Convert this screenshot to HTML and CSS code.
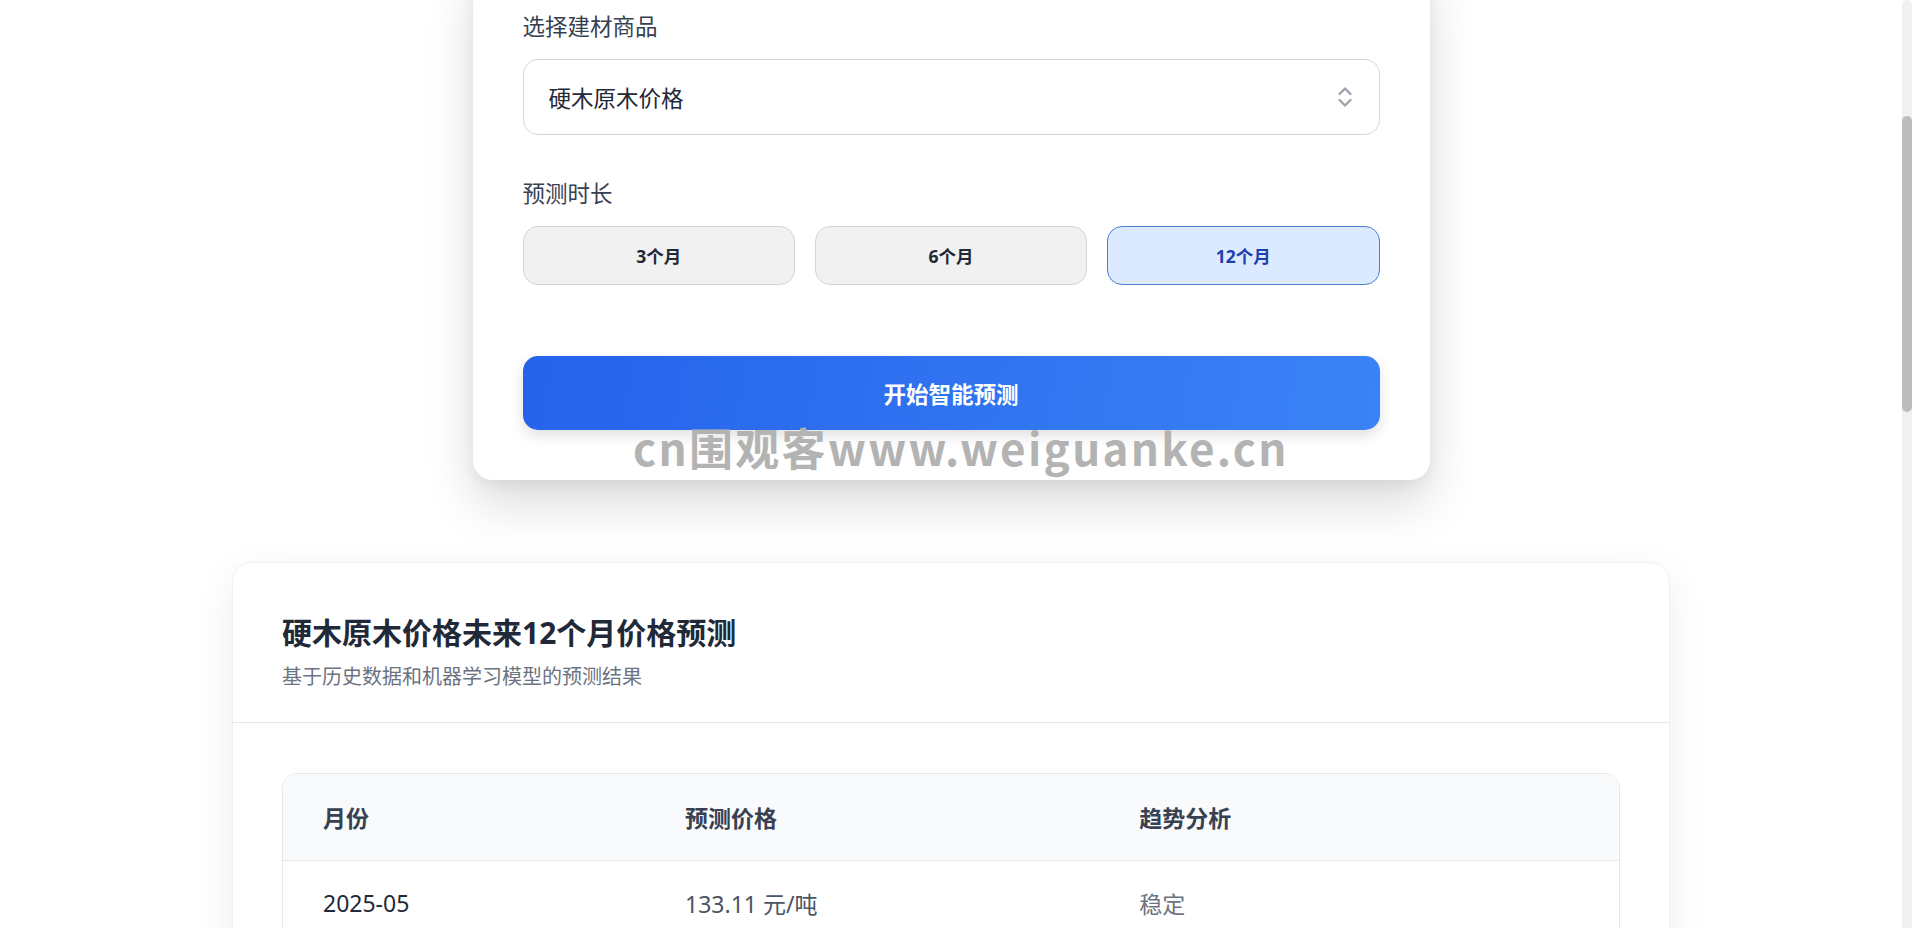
FILE: index.html
```html
<!DOCTYPE html>
<html lang="zh-CN">
<head>
  <meta charset="UTF-8">
  <title>建材价格智能预测</title>
  <link rel="stylesheet" href="styles.css">
</head>
<body>
  <div class="viewport">
    <main class="page">
      <!-- Forecast form -->
      <section class="card form-card">
        <div class="field">
          <label class="field-label">选择建材商品</label>
          <div class="select">
            <span>硬木原木价格</span>
            <svg class="select-icon" width="16" height="22" viewBox="0 0 16 22" fill="none" stroke="#9ca3af" stroke-width="2.4" stroke-linecap="round" stroke-linejoin="round">
              <polyline points="2.5,8 8,2.5 13.5,8"></polyline>
              <polyline points="2.5,14 8,19.5 13.5,14"></polyline>
            </svg>
          </div>
        </div>

        <div class="field">
          <label class="field-label">预测时长</label>
          <div class="period-options">
            <button class="period" type="button">3个月</button>
            <button class="period" type="button">6个月</button>
            <button class="period active" type="button">12个月</button>
          </div>
        </div>

        <button class="btn-primary" type="button">开始智能预测</button>
      </section>

      <!-- Forecast result -->
      <section class="card result-card">
        <div class="result-header">
          <h2>硬木原木价格未来12个月价格预测</h2>
          <p>基于历史数据和机器学习模型的预测结果</p>
        </div>
        <div class="result-body">
          <div class="table-wrap">
            <table>
              <thead>
                <tr>
                  <th class="col-month">月份</th>
                  <th class="col-price">预测价格</th>
                  <th>趋势分析</th>
                </tr>
              </thead>
              <tbody>
                <tr>
                  <td class="month">2025-05</td>
                  <td class="price">133.11 元/吨</td>
                  <td class="trend">稳定</td>
                </tr>
                <tr>
                  <td class="month">2025-06</td>
                  <td class="price">134.02 元/吨</td>
                  <td class="trend">上涨</td>
                </tr>
              </tbody>
            </table>
          </div>
        </div>
      </section>
    </main>

    <div class="scrollbar"><div class="thumb"></div></div>
  </div>

  <div class="watermark">cn围观客www.weiguanke.cn</div>
</body>
</html>
```

FILE: styles.css
```css
* {
  box-sizing: border-box;
}

html, body {
  margin: 0;
  padding: 0;
  height: 100%;
  overflow: hidden;
}

body {
  font-family: 'Noto Sans', 'Noto Sans CJK SC', sans-serif;
  background: #fff;
  color: #1f2937;
}

.viewport {
  display: flex;
  height: 928px;
}

.page {
  flex: 1;
  overflow: hidden;
}

.card {
  background: #fff;
  border-radius: 20px;
}

/* form card */
.form-card {
  width: 957px;
  margin: -40px auto 0;
  padding: 50px;
  box-shadow: 0 24px 50px rgba(0,0,0,0.14), 0 6px 14px rgba(0,0,0,0.05);
}

.field + .field {
  margin-top: 42px;
}

.field-label {
  display: block;
  font-size: 22.5px;
  line-height: 34px;
  margin-bottom: 15px;
  color: #374151;
}

.select {
  height: 76px;
  display: flex;
  align-items: center;
  justify-content: space-between;
  padding: 0 26px 0 25px;
  border: 1px solid #d1d5db;
  border-radius: 15px;
  font-size: 22.5px;
  color: #1f2937;
}

.period-options {
  display: grid;
  grid-template-columns: repeat(3, 1fr);
  gap: 20px;
}

.period {
  height: 59px;
  background: #f1f1f1;
  border: 1px solid #d4d4d8;
  border-radius: 15px;
  font-family: inherit;
  font-size: 17.5px;
  font-weight: bold;
  color: #1f2937;
  cursor: pointer;
}

.period.active {
  background: #dbeafe;
  border-color: #4a80cc;
  color: #1e40af;
}

.btn-primary {
  display: block;
  width: 100%;
  height: 74px;
  margin-top: 71px;
  border: none;
  border-radius: 15px;
  background: linear-gradient(100deg, #2563eb, #3b82f6);
  color: #fff;
  font-family: inherit;
  font-size: 22.5px;
  font-weight: bold;
  box-shadow: 0 6px 14px rgba(0,0,0,0.12);
  cursor: pointer;
}

/* result card */
.result-card {
  width: 1438px;
  margin: 82px auto 0;
  border: 1px solid #f0f0f0;
  box-shadow: 0 12px 40px rgba(0,0,0,0.07);
}

.result-header {
  padding: 49px 49px 30px;
  border-bottom: 1px solid #e5e7eb;
}

.result-header h2 {
  margin: 0;
  font-size: 30px;
  line-height: 42px;
  font-weight: bold;
  color: #1f2937;
}

.result-header p {
  margin: 8px 0 0;
  font-size: 20px;
  line-height: 30px;
  color: #6b7280;
}

.result-body {
  padding: 50px 49px;
}

.table-wrap {
  border: 1px solid #e5e7eb;
  border-radius: 15px;
  overflow: hidden;
}

table {
  width: 100%;
  border-collapse: collapse;
}

th, td {
  height: 86px;
  padding: 0 40px;
  text-align: left;
  font-size: 23px;
}

th {
  background: #f9fafb;
  border-bottom: 1px solid #e5e7eb;
  font-weight: bold;
  color: #374151;
}

td {
  border-bottom: 1px solid #e5e7eb;
}

.col-month {
  width: 27.1%;
}

.col-price {
  width: 34%;
}

.month {
  color: #1f2937;
}

.price {
  color: #4b5563;
}

.trend {
  color: #6b7280;
}

/* scrollbar */
.scrollbar {
  width: 10px;
  background: #f1f1f1;
  border-radius: 5px 5px 0 0;
}

.thumb {
  margin-top: 116px;
  height: 296px;
  border-radius: 5px;
  background: #bcbcbc;
}

/* watermark */
.watermark {
  position: absolute;
  left: 633px;
  top: 425px;
  font-family: 'Noto Sans CJK SC', sans-serif;
  font-size: 44px;
  line-height: 1;
  font-weight: bold;
  letter-spacing: 2.3px;
  color: #b3b3b3;
  pointer-events: none;
}
```
